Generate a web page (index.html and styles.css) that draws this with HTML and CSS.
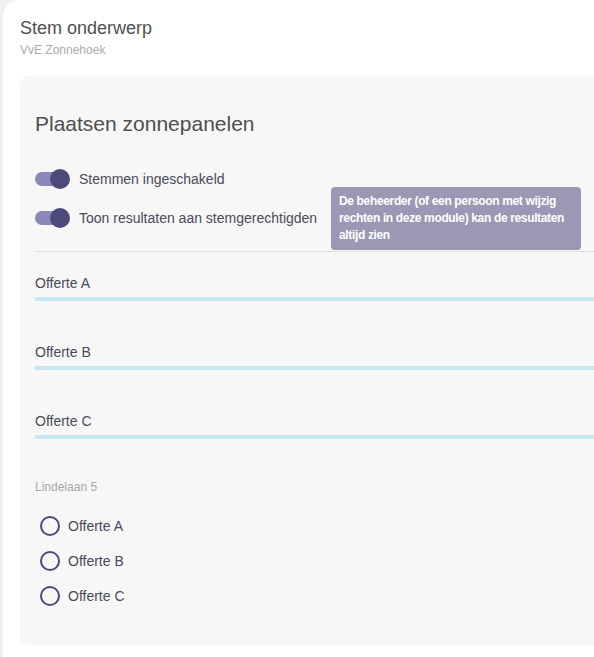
FILE: index.html
```html
<!DOCTYPE html>
<html>
<head>
<meta charset="utf-8">
<title>Stem onderwerp</title>
<link rel="stylesheet" href="styles.css">
</head>
<body>
<div class="card">
	<div class="card-head">
		<div class="title">Stem onderwerp</div>
		<div class="subtitle">VvE Zonnehoek</div>
	</div>
	<div class="panel">
		<div class="panel-title">Plaatsen zonnepanelen</div>
		<div class="settings">
			<label class="switch-row">
				<span class="switch"><span class="thumb"></span></span>
				<span>Stemmen ingeschakeld</span>
			</label>
			<label class="switch-row">
				<span class="switch"><span class="thumb"></span></span>
				<span>Toon resultaten aan stemgerechtigden</span>
				<span class="tooltip">De beheerder (of een persoon met wijzig rechten in deze module) kan de resultaten altijd zien</span>
			</label>
		</div>
		<div class="results">
			<div class="result">
				<div class="result-label">Offerte A</div>
				<div class="bar"></div>
			</div>
			<div class="result">
				<div class="result-label">Offerte B</div>
				<div class="bar"></div>
			</div>
			<div class="result">
				<div class="result-label">Offerte C</div>
				<div class="bar"></div>
			</div>
		</div>
		<div class="vote">
			<div class="vote-name">Lindelaan 5</div>
			<label class="radio-row"><span class="radio"></span>Offerte A</label>
			<label class="radio-row"><span class="radio"></span>Offerte B</label>
			<label class="radio-row"><span class="radio"></span>Offerte C</label>
		</div>
	</div>
</div>
</body>
</html>
```
FILE: styles.css
```css
html, body {
	margin: 0px;
	padding: 0px;
	overflow: hidden;
}
body {
	background: #eef0f3;
	font-family: "Liberation Sans", Arial, sans-serif;
	color: #4a4a5a;
	padding: 0 0 0 3px;
}
.card {
	width: 760px;
	height: 700px;
	background: #fff;
	border-radius: 16px 0 0 0;
	padding: 18px 0 0 17px;
	box-sizing: border-box;
}
.title {
	font-size: 18px;
	color: #4f4f4f;
	line-height: 20px;
}
.subtitle {
	font-size: 12px;
	color: #ababab;
	margin-top: 5px;
	line-height: 14px;
}
.panel {
	margin-top: 19px;
	background: #f7f7f7;
	border-radius: 8px;
	height: 569px;
	padding-top: 36px;
	box-sizing: border-box;
}
.panel-title {
	font-size: 21px;
	color: #4f4f4f;
	padding-left: 15px;
	line-height: 24px;
}
.settings {
	padding: 33px 0 23px 0;
	border-bottom: 1px solid #dcdcdc;
	margin-left: 15px;
}
.switch-row {
	display: flex;
	align-items: center;
	font-size: 14px;
	height: 20px;
	margin-bottom: 19px;
	position: relative;
}
.switch-row:last-child {
	margin-bottom: 0;
}
.switch {
	position: relative;
	width: 34px;
	height: 14px;
	border-radius: 7px;
	background: #8b89bb;
	margin-right: 10px;
	flex-shrink: 0;
}
.thumb {
	position: absolute;
	right: -1px;
	top: -3px;
	width: 20px;
	height: 20px;
	border-radius: 50%;
	background: #4b4a7b;
}
.tooltip {
	position: absolute;
	left: 296px;
	top: -21px;
	width: 234px;
	padding: 6px 8px;
	background: #9a98b4;
	color: #fff;
	font-size: 12px;
	font-weight: bold;
	line-height: 17px;
	border-radius: 4px;
	letter-spacing: -0.35px;
}
.results {
	padding-left: 15px;
	padding-top: 23px;
}
.result {
	margin-bottom: 43px;
}
.result-label {
	font-size: 14px;
	line-height: 16px;
}
.bar {
	margin-top: 6px;
	height: 4px;
	background: #c5e7f3;
}
.vote {
	padding-left: 15px;
	margin-top: -2px;
}
.vote-name {
	font-size: 12px;
	color: #a8a8a8;
	line-height: 14px;
	margin-bottom: 21px;
}
.radio-row {
	display: flex;
	align-items: center;
	font-size: 14px;
	height: 22px;
	margin-left: 5px;
	margin-bottom: 13px;
}
.radio {
	width: 16px;
	height: 16px;
	border: 2px solid #4b4a7b;
	border-radius: 50%;
	margin-right: 8px;
}
```
